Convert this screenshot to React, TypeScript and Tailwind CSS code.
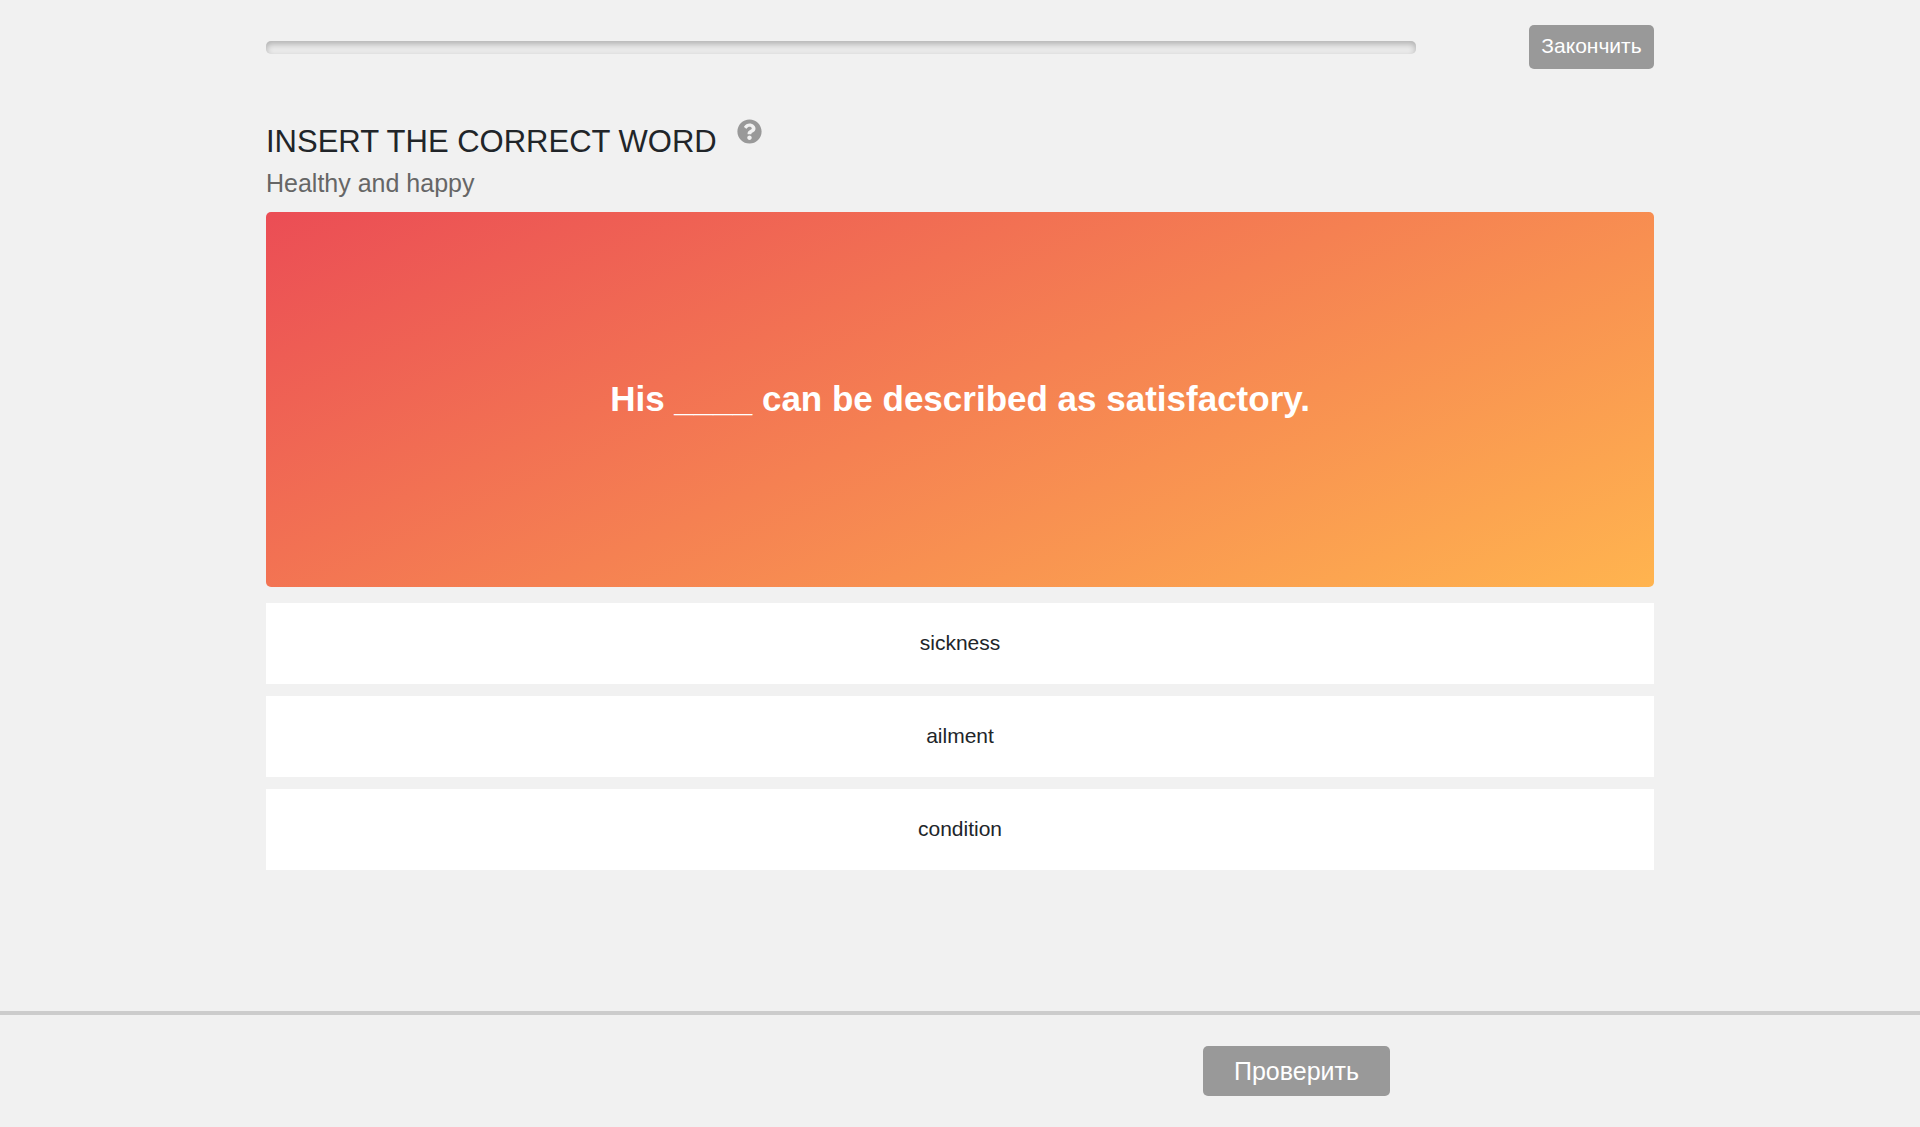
import { useState } from "react";
import { FaQuestionCircle } from "react-icons/fa";

const options = ["sickness", "ailment", "condition"];

export default function App() {
  const [selected, setSelected] = useState<string | null>(null);

  return (
    <div className="flex min-h-screen flex-col bg-[#f1f1f1] font-['Liberation_Sans',Arial,sans-serif] text-[#212529]">
      <header className="mx-auto flex w-full max-w-[1388px] items-start gap-[113px] pt-[25px]">
        <div
          role="progressbar"
          aria-label="Progress"
          aria-valuenow={0}
          aria-valuemin={0}
          aria-valuemax={100}
          className="mt-4 h-[13px] flex-1 rounded-[5px] bg-[#ebebeb] shadow-[inset_0_3px_6px_rgba(0,0,0,0.25)]"
        />
        <button
          type="button"
          className="h-11 min-w-[125px] rounded-[5px] bg-[#999999] px-3 pb-[2px] text-[21px] leading-6 text-white"
        >
          Закончить
        </button>
      </header>

      <main className="mx-auto w-full max-w-[1388px] grow pt-[47px]">
        <div className="flex items-start gap-5">
          <h1 className="pt-[5px] text-[31px] leading-[42px]">INSERT THE CORRECT WORD</h1>
          <button type="button" aria-label="Help" className="pt-[3px] text-[#999999]">
            <FaQuestionCircle className="size-[25px]" />
          </button>
        </div>
        <h2 className="text-[25px] leading-[40px] text-[#666666]">Healthy and happy</h2>

        <section className="mt-[9px] flex h-[375px] items-center justify-center rounded-[5px] bg-[linear-gradient(156deg,#eb4d55,#ffb44f)] px-6 text-center">
          <p className="pb-[2px] text-[35px] leading-[42px] font-bold text-white">
            His ____ can be described as satisfactory.
          </p>
        </section>

        <div className="mt-4 flex flex-col gap-3">
          {options.map((option) => (
            <button
              key={option}
              type="button"
              aria-pressed={selected === option}
              onClick={() => setSelected(option)}
              className="h-[81px] w-full bg-white pb-[2px] text-center text-[21px] leading-[30px]"
            >
              {option}
            </button>
          ))}
        </div>
      </main>

      <footer className="border-t-4 border-[#cccccc]">
        <div className="mx-auto flex w-full max-w-[1388px] justify-end pt-[31px] pr-[264px] pb-[31px]">
          <button
            type="button"
            className="h-[50px] rounded-[5px] bg-[#999999] px-[31px] text-[25px] leading-[38px] text-white"
          >
            Проверить
          </button>
        </div>
      </footer>
    </div>
  );
}
